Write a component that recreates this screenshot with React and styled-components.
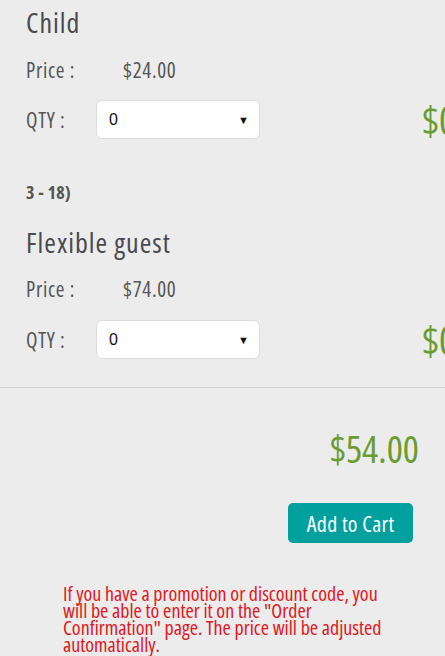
import React from "react";
import styled, { createGlobalStyle } from "styled-components";

const GlobalStyle = createGlobalStyle`
  html, body {
    margin: 0;
    padding: 0;
    background: #ececec;
    overflow: hidden;
  }
  body {
    font-family: "Open Sans", "DejaVu Sans Condensed", sans-serif;
    font-stretch: 75%;
    color: #555;
  }
`;

const Page = styled.div`
  width: 445px;
  height: 656px;
  overflow: hidden;
  background: #ececec;
`;

const Products = styled.div`
  padding-left: 26px;
  padding-bottom: 28px;
  border-bottom: 1px solid #d4d4d4;
`;

const Product = styled.div`
  display: flex;
  flex-direction: column;
`;

const Title = styled.h2`
  margin: 0;
  height: 44px;
  line-height: 44px;
  font-size: 28px;
  letter-spacing: 1px;
  font-weight: normal;
  color: #4a4a52;
`;

const PriceRow = styled.div`
  display: flex;
  align-items: center;
  height: 48px;
  margin-top: ${(p) => p.$gap}px;
  font-size: 21px;
  letter-spacing: 0.7px;
`;

const Label = styled.span`
  width: 97px;
  flex-shrink: 0;
`;

const QtyRow = styled.div`
  display: flex;
  align-items: center;
  height: 39px;
  margin-top: ${(p) => p.$gap}px;
  font-size: 21px;
  letter-spacing: 0.7px;
  white-space: nowrap;
`;

const QtyLabel = styled.span`
  width: 70px;
  flex-shrink: 0;
`;

const Select = styled.div`
  box-sizing: border-box;
  width: 164px;
  height: 39px;
  flex-shrink: 0;
  display: flex;
  align-items: center;
  justify-content: space-between;
  padding: 0 10px 0 12px;
  background: #fff;
  border: 1px solid #dcdcdc;
  border-radius: 6px;
  font-family: "Liberation Sans", Arial, sans-serif;
  font-stretch: normal;
  letter-spacing: 0;
  font-size: 16px;
  color: #111;
`;

const Caret = styled.span`
  font-size: 11px;
  color: #111;
`;

const Amount = styled.span`
  margin-left: 162px;
  line-height: 39px;
  font-size: 40px;
  letter-spacing: 0;
  color: #6b9c2f;
`;

const AgeNote = styled.div`
  margin-top: 43px;
  height: 20px;
  line-height: 20px;
  font-size: 18px;
  letter-spacing: 0.3px;
  font-weight: bold;
  color: #555;
`;

const SecondTitle = styled(Title)`
  margin-top: 18px;
`;

const Summary = styled.div`
  display: flex;
  flex-direction: column;
  align-items: flex-end;
  padding-right: 26px;
`;

const Total = styled.div`
  margin-top: 35px;
  height: 50px;
  line-height: 50px;
  font-size: 38px;
  color: #6b9c2f;
`;

const CartButton = styled.button`
  margin-top: 30px;
  margin-right: 6px;
  width: 125px;
  height: 40px;
  border: none;
  border-radius: 5px;
  background: #00a09f;
  color: #fff;
  font-family: inherit;
  font-stretch: inherit;
  font-size: 22px;
  letter-spacing: 0.3px;
  cursor: pointer;
`;

const Notice = styled.p`
  margin: 42px 0 0 63px;
  width: 326px;
  font-size: 20px;
  line-height: 17px;
  color: #e3161d;
`;

const QtySelect = () => (
  <Select>
    <span>0</span>
    <Caret>▼</Caret>
  </Select>
);

export default function App() {
  return (
    <Page>
      <GlobalStyle />
      <Products>
        <Product>
          <Title>Child</Title>
          <PriceRow $gap={2}>
            <Label>Price :</Label>
            <span>$24.00</span>
          </PriceRow>
          <QtyRow $gap={6}>
            <QtyLabel>QTY :</QtyLabel>
            <QtySelect />
            <Amount>$0.00</Amount>
          </QtyRow>
          <AgeNote>3 - 18)</AgeNote>
        </Product>
        <Product>
          <SecondTitle>Flexible guest</SecondTitle>
          <PriceRow $gap={1}>
            <Label>Price :</Label>
            <span>$74.00</span>
          </PriceRow>
          <QtyRow $gap={7}>
            <QtyLabel>QTY :</QtyLabel>
            <QtySelect />
            <Amount>$0.00</Amount>
          </QtyRow>
        </Product>
      </Products>
      <Summary>
        <Total>$54.00</Total>
        <CartButton>Add to Cart</CartButton>
      </Summary>
      <Notice>
        If you have a promotion or discount code, you will be able to enter it
        on the "Order Confirmation" page. The price will be adjusted
        automatically.
      </Notice>
    </Page>
  );
}
